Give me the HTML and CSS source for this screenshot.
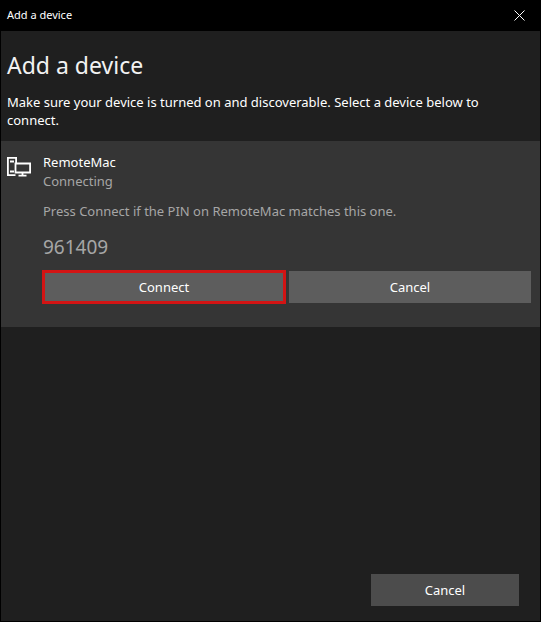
FILE: index.html
```html
<!doctype html>
<html lang="en">
  <head>
    <meta charset="UTF-8" />
    <meta name="viewport" content="width=device-width, initial-scale=1.0" />
    <title>Add a device</title>
    <link rel="stylesheet" href="styles.css">
  </head>
  <body>
    <header class="titlebar">
      <span>Add a device</span>
      <button class="close" type="button" aria-label="Close">
        <svg width="11" height="11" viewBox="0 0 11 11">
          <path d="M0.5 0.5L10.5 10.5M10.5 0.5L0.5 10.5" />
        </svg>
      </button>
    </header>
    <main class="content">
      <h1>Add a device</h1>
      <p class="intro">
        Make sure your device is turned on and discoverable. Select a device
        below to connect.
      </p>
      <section class="device">
        <svg class="device-icon" width="24" height="20" viewBox="0 0 24 20">
          <path d="M8.5 18.1H.9V.9H9.1V6M3 4.5H7M3 14.5H7" />
          <path d="M8.5 6.5H23.1V15.5H8.5Z" />
          <path d="M15.5 16V18.5M11.5 18.7H19.5" />
        </svg>
        <div class="device-info">
          <h2>RemoteMac</h2>
          <p class="status">Connecting</p>
          <p class="hint">Press Connect if the PIN on RemoteMac matches this one.</p>
          <p class="pin">961409</p>
          <div class="actions">
            <button class="btn connect" type="button">Connect</button>
            <button class="btn" type="button">Cancel</button>
          </div>
        </div>
      </section>
      <footer class="footer">
        <button class="btn cancel" type="button">Cancel</button>
      </footer>
    </main>
  </body>
</html>
```

FILE: styles.css
```css
* {
  box-sizing: border-box;
}
body {
  margin: 0;
  min-height: 100vh;
  display: flex;
  flex-direction: column;
  background-color: #000;
  color: #fff;
  font-family: "Segoe UI", "Noto Sans", "Open Sans", sans-serif;
  font-size: 13px;
  line-height: 18px;
}
h1,
h2,
p {
  margin: 0;
  font-weight: 400;
}
button {
  border: 0;
  padding: 0;
  color: inherit;
  font: inherit;
}
.titlebar {
  display: flex;
  justify-content: space-between;
  align-items: center;
  height: 30px;
  margin-bottom: 1px;
  padding-left: 7px;
  font-size: 11px;
}
.close {
  display: flex;
  justify-content: center;
  align-items: center;
  width: 43px;
  height: 30px;
  background: none;
}
.close svg {
  fill: none;
  stroke: #fff;
}
.content {
  flex: 1;
  display: flex;
  flex-direction: column;
  margin: 0 1px 1px;
  background-color: #1f1f1f;
}
h1 {
  padding: 18px 6px 0;
  font-size: 23px;
  line-height: 32px;
  color: #f2f2f2;
}
.intro {
  padding: 12px 48px 12px 6px;
}
.device {
  display: flex;
  gap: 12px;
  padding: 12px 9px 24px 6px;
  background-color: #353535;
}
.device-icon {
  flex: none;
  margin-top: 4px;
  fill: none;
  stroke: #fff;
  stroke-width: 1.8;
}
.device-info {
  flex: 1;
  color: #a6a6a6;
}
h2 {
  font-size: 13px;
  color: #fff;
}
.status {
  margin-top: 1px;
}
.hint {
  margin-top: 12px;
}
.pin {
  margin: 13px 0 10px;
  font-size: 19px;
  line-height: 28px;
}
.actions {
  display: flex;
  gap: 4px;
}
.btn {
  flex: 1;
  height: 32px;
  background-color: #5d5d5d;
  color: #fff;
}
.connect {
  outline: 3px solid #d31414;
  outline-offset: -2px;
}
.footer {
  display: flex;
  justify-content: flex-end;
  margin-top: auto;
  padding: 16px 21px 15px;
}
.cancel {
  flex: none;
  width: 148px;
  background-color: #4c4c4c;
}
```
